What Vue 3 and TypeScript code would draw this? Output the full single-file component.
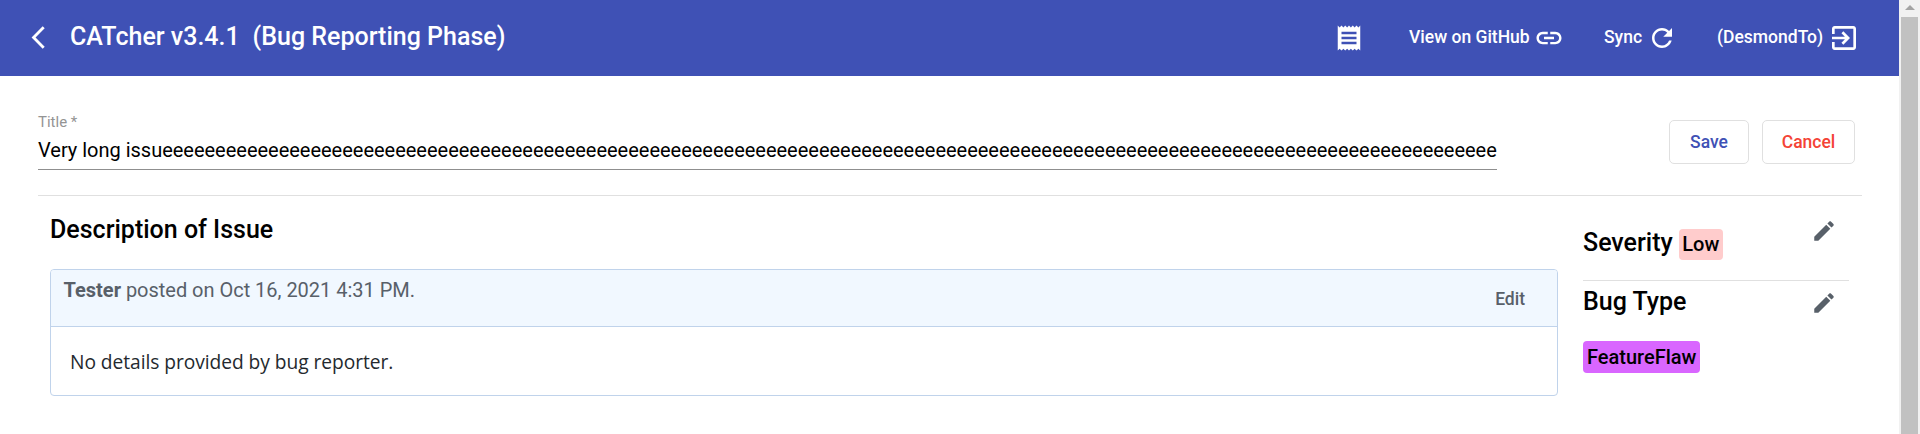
<script setup lang="ts">
const issueTitle = 'Very long issu' + 'e'.repeat(126)
const pencil = 'M3 17.25V21h3.75L17.81 9.94l-3.75-3.75L3 17.25zM20.71 7.04c.39-.39.39-1.02 0-1.41l-2.34-2.34c-.39-.39-1.02-.39-1.41 0l-1.83 1.83 3.75 3.75 1.83-1.83z'
</script>

<template>
  <div class="window">
    <div class="page">
      <header class="toolbar">
        <svg class="back" viewBox="0 0 24 24"><path d="M17.51 3.87 15.73 2.1 5.84 12l9.9 9.9 1.77-1.77L9.38 12z" /></svg>
        <h1><span>CATcher v3.4.1</span><span class="phase">(Bug Reporting Phase)</span></h1>
        <svg class="icon receipt" viewBox="0 0 24 24"><path d="M18 17H6v-2h12v2zm0-4H6v-2h12v2zm0-4H6V7h12v2zM3 22l1.5-1.5L6 22l1.5-1.5L9 22l1.5-1.5L12 22l1.5-1.5L15 22l1.5-1.5L18 22l1.5-1.5L21 22V2l-1.5 1.5L18 2l-1.5 1.5L15 2l-1.5 1.5L12 2l-1.5 1.5L9 2 7.5 3.5 6 2 4.5 3.5 3 2v20z" /></svg>
        <a class="action github"><span>View on GitHub</span><svg class="icon" viewBox="0 0 24 24"><path d="M3.9 12c0-1.71 1.39-3.1 3.1-3.1h4V7H7c-2.76 0-5 2.24-5 5s2.24 5 5 5h4v-1.9H7c-1.71 0-3.1-1.39-3.1-3.1zM8 13h8v-2H8v2zm9-6h-4v1.9h4c1.71 0 3.1 1.39 3.1 3.1s-1.39 3.1-3.1 3.1h-4V17h4c2.76 0 5-2.24 5-5s-2.24-5-5-5z" /></svg></a>
        <a class="action sync"><span>Sync</span><svg class="icon" viewBox="0 0 24 24"><path d="M17.65 6.35C16.2 4.9 14.21 4 12 4c-4.42 0-7.99 3.58-7.99 8s3.57 8 7.99 8c3.73 0 6.84-2.55 7.73-6h-2.08c-.82 2.33-3.04 4-5.65 4-3.31 0-6-2.69-6-6s2.69-6 6-6c1.66 0 3.14.69 4.22 1.78L13 11h7V4l-2.35 2.35z" /></svg></a>
        <a class="action user"><span>(DesmondTo)</span><svg class="icon" viewBox="0 0 24 24"><path d="M10.09 15.59 11.5 17l5-5-5-5-1.41 1.41L12.67 11H3v2h9.67l-2.58 2.59zM19 3H5c-1.11 0-2 .9-2 2v4h2V5h14v14H5v-4H3v4c0 1.1.89 2 2 2h14c1.1 0 2-.9 2-2V5c0-1.1-.9-2-2-2z" /></svg></a>
      </header>

      <section class="title-row">
        <div class="field">
          <label>Title *</label>
          <div class="value">{{ issueTitle }}</div>
        </div>
        <div class="buttons">
          <button class="save">Save</button>
          <button class="cancel">Cancel</button>
        </div>
      </section>

      <main class="content">
        <section class="description">
          <h2>Description of Issue</h2>
          <article class="card">
            <div class="card-head">
              <p class="posted"><strong>Tester</strong> posted on Oct 16, 2021 4:31 PM.</p>
              <button class="edit">Edit</button>
            </div>
            <div class="card-body">No details provided by bug reporter.</div>
          </article>
        </section>
        <aside class="labels">
          <div class="severity">
            <div class="label-line"><h2>Severity</h2><span class="chip low">Low</span></div>
            <svg class="pencil" viewBox="0 0 24 24"><path :d="pencil" /></svg>
          </div>
          <div class="bug-type">
            <h2>Bug Type</h2>
            <svg class="pencil" viewBox="0 0 24 24"><path :d="pencil" /></svg>
          </div>
          <span class="chip flaw">FeatureFlaw</span>
        </aside>
      </main>
    </div>
    <div class="scrollbar"><i class="arrow"></i><i class="thumb"></i></div>
  </div>
</template>

<style>
body { margin: 0; background: #fff; }
</style>

<style scoped>
* { box-sizing: border-box; }
.window { display: flex; width: 1920px; height: 434px; overflow: hidden; font-family: Roboto, "Liberation Sans", sans-serif; color: #000; background: #fff; }
.page { width: 1899px; flex: none; }
h1, h2, p { margin: 0; }
h2 { font-size: 25px; font-weight: 500; line-height: 30px; white-space: nowrap; }
button { font-family: inherit; background: transparent; padding: 0; border: 0; }

.toolbar { display: flex; align-items: center; height: 76px; background: #3f51b5; color: #fff; }
.toolbar svg { fill: currentColor; display: block; flex: none; }
.back { width: 27px; height: 27px; margin: 0 0 2px 25px; }
h1 { flex: 1; font-size: 25px; font-weight: 500; line-height: 30px; margin: 0 0 2px 18px; white-space: nowrap; }
.phase { margin-left: 12.8px; }
.icon { width: 30px; height: 30px; }
.receipt { margin-right: 45px; }
.action { display: flex; align-items: center; font-size: 17.5px; font-weight: 500; line-height: 24px; white-space: nowrap; }
.action span { margin-bottom: 2px; }
.action .icon { margin-left: 4px; }
.github { width: 195px; }
.sync { width: 113px; }
.user { width: 182px; }
.sync .icon { margin-left: 4.5px; }
.user .icon { width: 32px; height: 32px; margin-left: 4.8px; }

.title-row { display: flex; justify-content: space-between; height: 120px; margin: 0 37px 0 38px; border-bottom: 1px solid #e0e0e0; }
.field { width: 1459px; height: 94px; border-bottom: 1px solid #8f8f8f; padding-top: 36px; }
.field label { display: block; font-size: 15px; line-height: 20px; color: #949494; }
.value { font-size: 20px; line-height: 24px; margin-top: 6px; letter-spacing: -0.013px; white-space: nowrap; }
.buttons { display: flex; gap: 13px; padding: 44px 7px 0 0; }
.buttons button { height: 44px; border: 1px solid #e0e0e0; border-radius: 5px; font-size: 17.5px; font-weight: 500; }
.save { width: 80px; color: #3f51b5; }
.cancel { width: 93px; color: #f44336; }

.content { display: flex; }
.description { width: 1508px; margin-left: 50px; padding-top: 19px; }
.card { margin-top: 24px; height: 127px; border: 1px solid #c0d3eb; border-radius: 4px; overflow: hidden; }
.card-head { display: flex; justify-content: space-between; height: 57px; background: #f1f8ff; border-bottom: 1px solid #c0d3eb; color: #586069; padding: 8px 32px 0 12.6px; }
.posted { font-size: 20px; line-height: 24px; letter-spacing: -0.02px; }
.edit { color: #586069; font-size: 17.5px; font-weight: 500; height: 42px; }
.card-body { font-family: "Open Sans", sans-serif; font-size: 19.2px; line-height: 28px; letter-spacing: -0.05px; padding: 21px 19px; color: #24292e; }
.labels { width: 266px; margin-left: 25px; }
.severity { display: flex; justify-content: space-between; height: 85px; border-bottom: 1px solid #e0e0e0; }
.label-line { display: flex; padding-top: 32px; gap: 6px; }
.pencil { width: 26px; height: 26px; fill: #586069; margin: 22px 12px 0 0; }
.bug-type { display: flex; justify-content: space-between; height: 60px; padding-top: 6px; }
.bug-type .pencil { margin-top: 3px; }
.chip { display: inline-block; height: 31px; line-height: 31px; border-radius: 4px; font-size: 20px; font-weight: 500; padding: 0 4px; }
.low { background: #fcc; margin-top: 1px; padding: 0 3.5px; }
.flaw { background: #d966ff; height: 32px; line-height: 33px; }

.scrollbar { width: 21px; background: #f1f1f1; display: flex; flex-direction: column; align-items: center; }
.arrow { width: 0; height: 0; margin-top: 5px; border: 5px solid transparent; border-top: 0; border-bottom: 5px solid #a3a3a3; }
.thumb { width: 17px; flex: 1; margin-top: 7px; background: #c1c1c1; }
</style>
